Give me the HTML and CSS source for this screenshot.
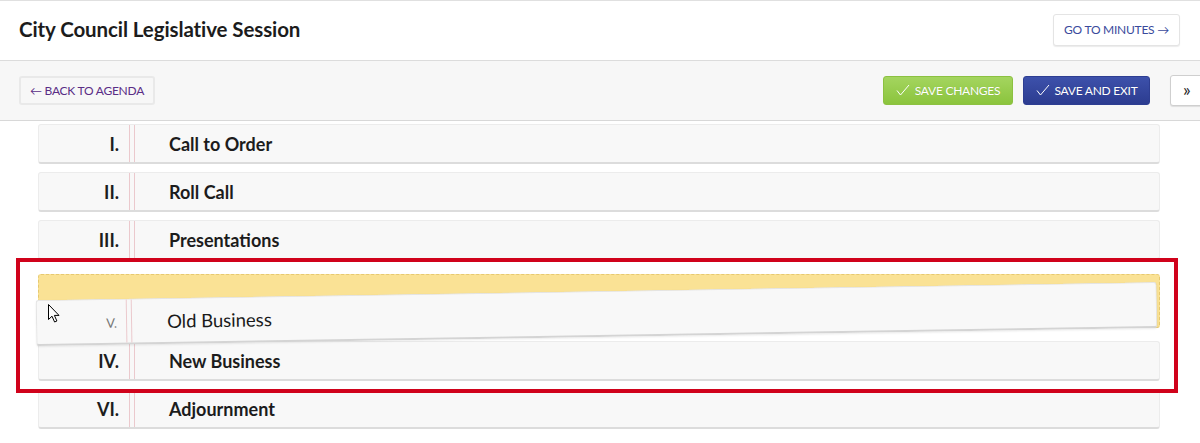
FILE: index.html
```html
<!DOCTYPE html>
<html lang="en">
<head>
<meta charset="utf-8">
<title>City Council Legislative Session</title>
<link rel="stylesheet" href="styles.css">
</head>
<body>
<div class="page">
  <header class="page-header">
    <h1 class="title">City Council Legislative Session</h1>
    <button class="btn btn-white">GO TO MINUTES &#8594;</button>
  </header>
  <div class="toolbar">
    <button class="btn btn-back">&#8592; BACK TO AGENDA</button>
    <div class="toolbar-actions">
      <button class="btn btn-green"><svg class="check" viewBox="0 0 14 12" width="14" height="12"><polyline points="1,6.5 4.5,11 13,1" fill="none" stroke="#fff" stroke-width="1"/></svg>SAVE CHANGES</button>
      <button class="btn btn-blue"><svg class="check" viewBox="0 0 14 12" width="14" height="12"><polyline points="1,6.5 4.5,11 13,1" fill="none" stroke="#fff" stroke-width="1"/></svg>SAVE AND EXIT</button>
      <button class="btn btn-more">&#187;</button>
    </div>
  </div>
  <div class="agenda">
    <div class="item"><div class="num">I.</div><div class="name">Call to Order</div></div>
    <div class="item"><div class="num">II.</div><div class="name">Roll Call</div></div>
    <div class="item"><div class="num">III.</div><div class="name">Presentations</div></div>
    <div class="placeholder"></div>
    <div class="item"><div class="num">IV.</div><div class="name">New Business</div></div>
    <div class="item"><div class="num">VI.</div><div class="name">Adjournment</div></div>

    <div class="item dragging"><div class="num small">V.</div><div class="name light">Old Business</div></div>
    <svg class="cursor" viewBox="0 0 13 19" width="13" height="19"><path d="M0.5,0.5 L0.5,15.5 L4,12.2 L6.6,18 L8.9,17 L6.4,11.4 L11,11.4 Z" fill="#fff" stroke="#000" stroke-width="1" stroke-linejoin="round"/></svg>
    <div class="highlight"></div>
  </div>
</div>
</body>
</html>
```
FILE: styles.css
```css
* { box-sizing: border-box; }
html, body { margin: 0; padding: 0; overflow: hidden; background: #fff; }
body { font-family: Lato, "Open Sans", Arial, sans-serif; color: #1d1d1d; }
.page { width: 1200px; height: 443px; border-top: 1px solid #e0e0e0; position: relative; }

.page-header {
  height: 60px;
  display: flex;
  align-items: center;
  justify-content: space-between;
  padding: 0 20px 2px 19px;
  border-bottom: 1px solid #dcdcdc;
}
.title { margin: 0 0 2px; font-size: 20.5px; font-weight: 700; color: #1c1c1c; letter-spacing: -0.1px; }

.btn {
  font-family: Lato, Arial, sans-serif;
  font-size: 12px;
  border-radius: 3px;
  cursor: pointer;
  display: inline-flex;
  align-items: center;
  justify-content: center;
  padding: 0;
  letter-spacing: -0.25px;
}
.btn-white {
  width: 127px; height: 32px;
  background: #fff;
  border: 1px solid #e4e4e4;
  box-shadow: 0 1px 1px rgba(0,0,0,0.08);
  color: #3a4a9c;
}

.toolbar {
  height: 60px;
  background: #f7f7f7;
  border-bottom: 1px solid #d8d8d8;
  display: flex;
  align-items: center;
  justify-content: space-between;
  padding: 0 0 0 19px;
}
.btn-back {
  width: 136px; height: 29px;
  background: #f7f7f7;
  border: 2px solid #e9e9e9;
  color: #5a2d86;
}
.toolbar-actions { display: flex; align-items: center; margin-right: -12px; }
.btn-green, .btn-blue {
  height: 29px;
  color: #fff;
  text-shadow: 0 0 1px rgba(0,0,0,0.15);
}
.btn-green {
  width: 130px;
  background: linear-gradient(#a4d55f, #8bc43d);
  border: 1px solid #8cc141;
  margin-right: 10px;
}
.btn-blue {
  width: 127px;
  background: linear-gradient(#3d51ab, #2c3c90);
  border: 1px solid #2e3e92;
  margin-right: 20px;
}
.check { margin-right: 5px; margin-top: -1px; }
.btn-more {
  width: 42px; height: 31px;
  background: #fff;
  border: 1px solid #cfcfcf;
  box-shadow: 0 1px 1px rgba(0,0,0,0.1);
  font-size: 18px;
  color: #222;
  justify-content: flex-start;
  padding-left: 12px;
  padding-bottom: 3px;
}

.agenda { position: relative; padding: 3px 40px 0 38px; }
.item {
  height: 40px;
  background: #f8f8f8;
  border: 1px solid #ececec;
  border-bottom: 2px solid #dcdcdc;
  border-radius: 3px;
  display: flex;
  align-items: stretch;
  margin-bottom: 8px;
}
.num {
  width: 91px;
  border-right: 1px solid #ebc9cd;
  text-align: right;
  padding-right: 10px;
  font-size: 18px;
  font-weight: 700;
  display: flex;
  align-items: center;
  justify-content: flex-end;
  margin-right: 4px;
}
.name {
  border-left: 1px solid #ebc9cd;
  padding-left: 34px;
  font-size: 18px;
  font-weight: 700;
  display: flex;
  align-items: center;
  color: #1c1c1c;
}
.placeholder {
  height: 54px;
  margin: 14px 0 13px;
  background: #fae295;
  border: 1px dashed #e6c971;
  border-radius: 3px;
}

.dragging {
  position: absolute;
  left: 36px;
  top: 170px;
  width: 1121px;
  height: 46px;
  margin: 0;
  transform: rotate(-0.92deg);
  box-shadow: 0 1px 2px rgba(0,0,0,0.08);
  border-color: #e4e4e4;
  border-bottom-color: #d4d4d4;
}
.dragging .num { width: 90px; padding-right: 9px; }
.num.small { font-size: 13px; font-weight: 400; color: #777; padding-top: 3px; }
.name.light { font-weight: 400; color: #1a1a1a; padding-left: 35px; font-size: 18.5px; }

.cursor { position: absolute; left: 48px; top: 183px; }

.highlight {
  position: absolute;
  left: 16px;
  top: 137px;
  width: 1162px;
  height: 135px;
  border: 4px solid #d0021b;
}
```
